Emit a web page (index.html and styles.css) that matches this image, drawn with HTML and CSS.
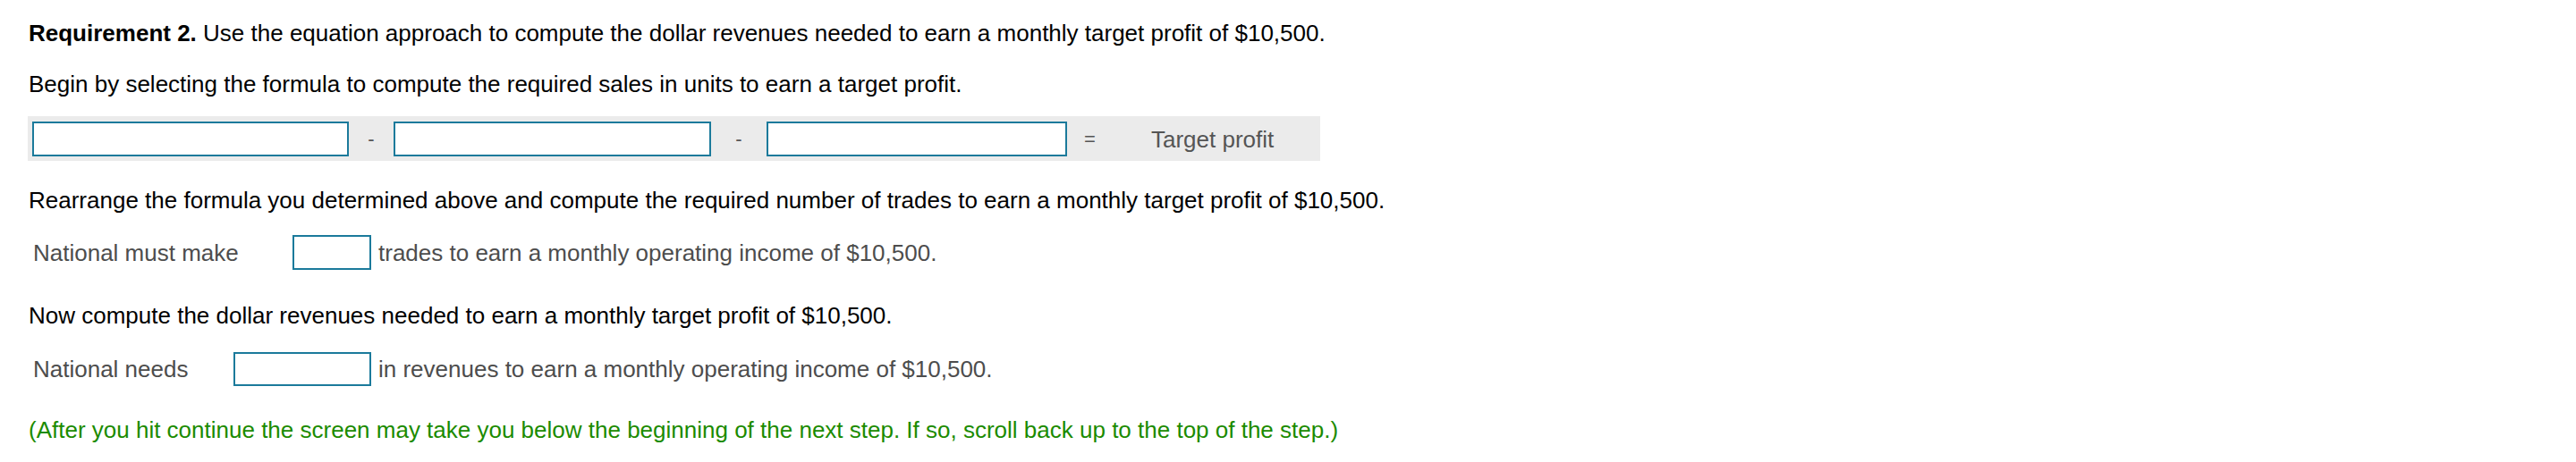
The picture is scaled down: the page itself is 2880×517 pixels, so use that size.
FILE: index.html
```html
<!DOCTYPE html>
<html lang="en">
<head>
<meta charset="utf-8">
<title>Requirement 2</title>
<link rel="stylesheet" href="styles.css">
</head>
<body>
<div class="page">
  <p class="line first"><b>Requirement 2.</b> Use the equation approach to compute the dollar revenues needed to earn a monthly target profit of $10,500.</p>
  <p class="line second">Begin by selecting the formula to compute the required sales in units to earn a target profit.</p>
  <div class="formula">
    <span class="box wide1"></span>
    <span class="op">-</span>
    <span class="box wide2"></span>
    <span class="op op2">-</span>
    <span class="box wide3"></span>
    <span class="op eq">=</span>
    <span class="result">Target profit</span>
  </div>
  <p class="line third">Rearrange the formula you determined above and compute the required number of trades to earn a monthly target profit of $10,500.</p>
  <div class="row row1">
    <span class="label label1">National must make</span>
    <span class="box small1"></span>
    <span class="tail">trades to earn a monthly operating income of $10,500.</span>
  </div>
  <p class="line fourth">Now compute the dollar revenues needed to earn a monthly target profit of $10,500.</p>
  <div class="row row2">
    <span class="label label2">National needs</span>
    <span class="box small2"></span>
    <span class="tail">in revenues to earn a monthly operating income of $10,500.</span>
  </div>
  <p class="line note">(After you hit continue the screen may take you below the beginning of the next step. If so, scroll back up to the top of the step.)</p>
</div>
</body>
</html>
```
FILE: styles.css
```css
html, body {
  margin: 0;
  padding: 0;
  background: #ffffff;
}

.page {
  padding: 22px 0 0 32px;
  font-family: "Liberation Sans", Arial, Helvetica, sans-serif;
  font-size: 26px;
  line-height: 30px;
  color: #000000;
}

.line {
  margin: 0;
  white-space: nowrap;
}

.second { margin-top: 27px; }

.formula {
  margin-top: 21px;
  margin-left: -1px;
  width: 1445px;
  height: 50px;
  box-sizing: border-box;
  padding: 6px 0 5px 5px;
  background: #ebebeb;
  display: flex;
  align-items: center;
}

.box {
  display: block;
  box-sizing: border-box;
  height: 39px;
  border: 2px solid #1b7a9b;
  background: #ffffff;
  flex: none;
}

.wide1 { width: 354px; }
.wide2 { width: 355px; }
.wide3 { width: 336px; }

.op {
  flex: none;
  width: 50px;
  text-align: center;
  color: #555555;
  font-size: 22px;
}
.op2 { width: 62px; }
.eq { width: 51px; }

.result {
  margin-left: 43px;
  color: #555555;
  white-space: nowrap;
}

.third { margin-top: 29px; }

.row {
  display: flex;
  align-items: center;
  padding-left: 5px;
  color: #4d4d4d;
  white-space: nowrap;
}

.row1 { margin-top: 24px; }
.row2 { margin-top: 26px; }

.label { flex: none; }
.label1 { width: 290px; }
.label2 { width: 224px; }

.small1 { width: 88px; height: 39px; }
.small2 { width: 154px; height: 38px; }

.tail { margin-left: 8px; }

.fourth { margin-top: 36px; }

.note {
  margin-top: 34px;
  color: #1b8b00;
}
```
